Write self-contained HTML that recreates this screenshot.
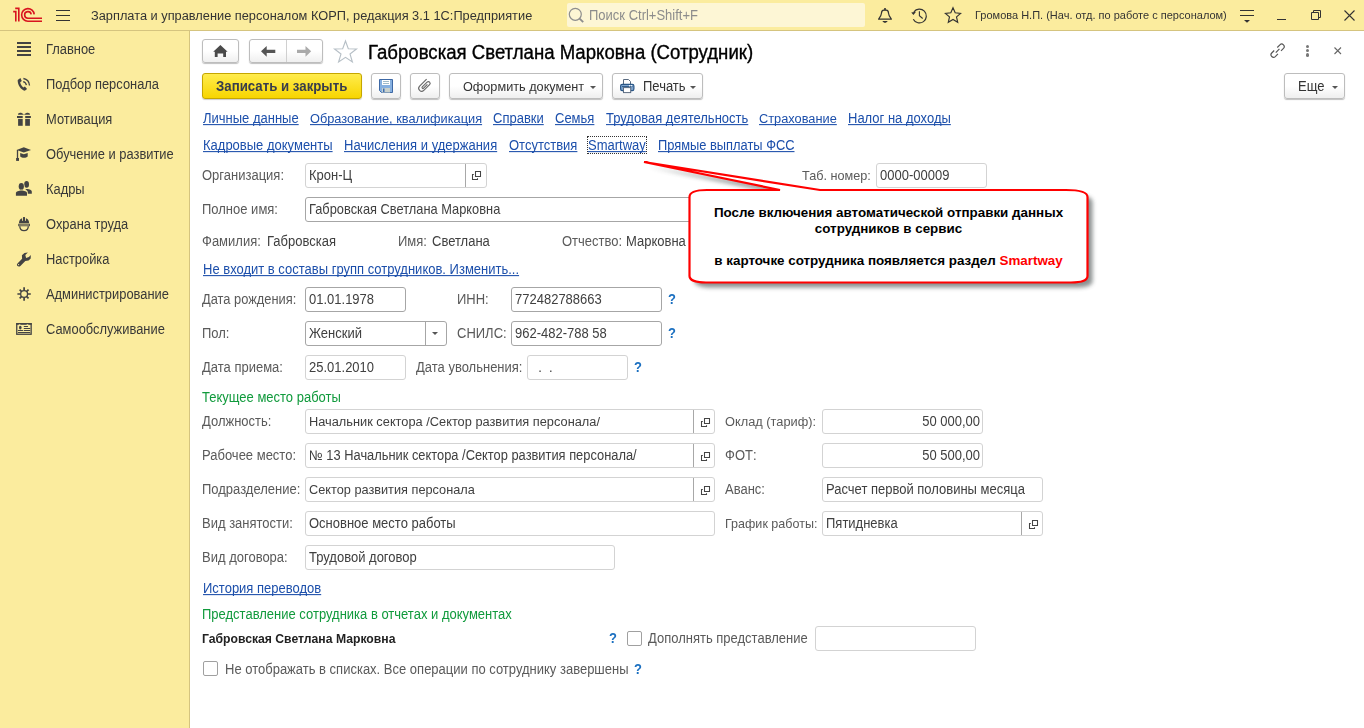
<!DOCTYPE html><html><head><meta charset="utf-8"><style>
*{margin:0;padding:0;box-sizing:border-box}
html,body{width:1364px;height:728px;overflow:hidden;background:#fff;font-family:"Liberation Sans",sans-serif}
.t{position:absolute;font-size:13px;line-height:16px;white-space:pre;color:#5a5a5a;transform:scaleY(1.07);transform-origin:0 12px}
.val{color:#404040}
.lnk{color:#1c4fab;text-decoration:underline;text-decoration-skip-ink:none}
.grn{color:#109a3c}
.inp{position:absolute;border:1px solid #d3d3d3;border-radius:3px;background:#fff}
.inp.dk{border-color:#a6a6a6}
.div{position:absolute;width:1px;background:#a8a8a8}
.div.dk{background:#a6a6a6}
.ic{position:absolute;overflow:visible}
.btn{position:absolute;border:1px solid #bdbdbd;border-radius:3px;background:linear-gradient(#fff 0%,#fff 50%,#efefef 100%);box-shadow:0 1px 1px rgba(0,0,0,0.25)}
#hdr{position:absolute;left:0;top:0;width:1364px;height:31px;background:#fbec9e;border-bottom:1px solid #d5c47f}
#side{position:absolute;left:0;top:31px;width:190px;height:697px;background:#fbec9e;border-right:1px solid #d5c47f}
.side{color:#383838}
</style></head><body>
<div id="hdr"></div>
<div id="side"></div>
<svg class="ic" style="left:10px;top:5px" width="36" height="20"><g fill="none" stroke="#d8141f" stroke-width="1.6"><path d="M3.2 6.6 H5.8 V16.6"/><path d="M5.2 3.4 H8.8 V16.6"/><path d="M24.2 9.4 A6.3 6.3 0 1 0 17.9 16.2 H32"/><path d="M21.2 9.4 A3.3 3.3 0 1 0 17.9 13.2 H32"/></g></svg>
<svg class="ic" style="left:56px;top:9px" width="14" height="12"><path d="M0 1.5h14M0 6.5h14M0 11.5h14" stroke="#333" stroke-width="1.2"/></svg>
<div class="t" style="left:91px;top:8px;font-size:12.8px;color:#333">Зарплата и управление персоналом КОРП, редакция 3.1 1С:Предприятие</div>
<div style="position:absolute;left:567px;top:3px;width:298px;height:24px;background:#fdf6d5;border-radius:2px"></div>
<svg class="ic" style="left:562px;top:2px" width="24" height="24"><circle cx="13.3" cy="12.3" r="6" fill="none" stroke="#8e8e8e" stroke-width="1.2"/><path d="M17.6 16.6 L21.2 20.2" stroke="#8e8e8e" stroke-width="1.9"/></svg>
<div class="t" style="left:589px;top:8px;color:#8c8c8c">Поиск Ctrl+Shift+F</div>
<svg class="ic" style="left:877px;top:7px" width="16" height="17"><path d="M1.6 12.2 C1.8 11.3 4.3 9 4.4 6.5 C4.5 4 5.2 3.3 6.8 3.2 H9.2 C10.8 3.3 11.5 4 11.6 6.5 C11.7 9 14.2 11.3 14.4 12.2 Z" fill="none" stroke="#333" stroke-width="1.2" stroke-linejoin="round"/><rect x="7.2" y="1" width="1.6" height="2.3" fill="#333"/><path d="M5.4 14 H10.7 C10 15.2 9 15.8 8 15.8 C7 15.8 6 15.2 5.4 14 Z" fill="#333"/></svg>
<svg class="ic" style="left:906px;top:3px" width="24" height="24"><path d="M7.3 16.2 A6.9 6.9 0 1 0 7.9 8.9" fill="none" stroke="#333" stroke-width="1.2"/><path d="M5.2 9.5 L10 8.7 L7.5 12.1 Z" fill="#333"/><path d="M13.4 8.2 V12.8 L16.7 15.5" fill="none" stroke="#333" stroke-width="1.1"/></svg>
<svg class="ic" style="left:944px;top:3px" width="20" height="24"><path d="M9.00 4.80 L11.17 9.81 L16.61 10.33 L12.52 13.94 L13.70 19.27 L9.00 16.50 L4.30 19.27 L5.48 13.94 L1.39 10.33 L6.83 9.81 Z" fill="none" stroke="#333" stroke-width="1.15" stroke-linejoin="miter"/></svg>
<div class="t" style="left:975px;top:7px;font-size:11px;color:#333">Громова Н.П. (Нач. отд. по работе с персоналом)</div>
<svg class="ic" style="left:1240px;top:9px" width="15" height="15"><path d="M0 1.5h14M0 6.5h14" stroke="#333" stroke-width="1.1"/><path d="M4 11h6l-3 2.7z" fill="#333"/></svg>
<div style="position:absolute;left:1277px;top:19px;width:9px;height:1px;background:#333"></div>
<svg class="ic" style="left:1311px;top:10px" width="10" height="10"><path d="M0.5 2.5h7v7h-7z M2.5 2.5v-2h7v7h-2" fill="none" stroke="#333" stroke-width="1"/></svg>
<svg class="ic" style="left:1344px;top:10px" width="11" height="11"><path d="M0.5 0.5L10.5 10.5M10.5 0.5L0.5 10.5" stroke="#333" stroke-width="1.1"/></svg>
<div class="t side" style="left:46px;top:42px;font-size:12.9px">Главное</div>
<div class="t side" style="left:46px;top:77px;font-size:12.9px">Подбор персонала</div>
<div class="t side" style="left:46px;top:112px;font-size:12.9px">Мотивация</div>
<div class="t side" style="left:46px;top:147px;font-size:12.9px">Обучение и развитие</div>
<div class="t side" style="left:46px;top:182px;font-size:12.9px">Кадры</div>
<div class="t side" style="left:46px;top:217px;font-size:12.9px">Охрана труда</div>
<div class="t side" style="left:46px;top:252px;font-size:12.9px">Настройка</div>
<div class="t side" style="left:46px;top:287px;font-size:12.9px">Администрирование</div>
<div class="t side" style="left:46px;top:322px;font-size:12.9px">Самообслуживание</div>
<svg class="ic" style="left:17px;top:42px" width="16" height="15"><path d="M0 1h14M0 5h14M0 9h14M0 13h14" stroke="#434343" stroke-width="2"/></svg>
<svg class="ic" style="left:17px;top:77px" width="16" height="15"><path d="M0.7 3 L3.4 0.9 L4.8 4 L3.2 5.2 C3.5 7.2 4.6 8.9 6.3 10.4 L7.9 9.6 L10.1 12.1 L7.8 13.7 C3.8 12.8 0.4 7.6 0.7 3 Z" fill="#434343"/><path d="M6.4 1.5 A7.6 7.6 0 0 1 12.5 8.5 M6.2 4.6 A4.5 4.5 0 0 1 9.4 8.2" fill="none" stroke="#434343" stroke-width="1.3"/></svg>
<svg class="ic" style="left:17px;top:112px" width="16" height="15"><path d="M1 2.7 C1 0.4 4.6 0 6.9 2.8 Z M13 2.7 C13 0.4 9.4 0 7.1 2.8 Z" fill="#434343"/><rect x="0" y="4" width="5.7" height="2" fill="#434343"/><rect x="8.2" y="4" width="5.7" height="2" fill="#434343"/><rect x="1.1" y="6.9" width="4.6" height="6.9" fill="#434343"/><rect x="8.2" y="6.9" width="4.7" height="6.9" fill="#434343"/></svg>
<svg class="ic" style="left:17px;top:147px" width="16" height="15"><path d="M-0.4 3 L6.8 0.3 L14 3 L6.8 5.5 Z" fill="#434343"/><path d="M3.2 5.9 L6.8 7.2 L10.7 5.9 V9.4 C9 11.2 5 11.2 3.2 9.4 Z" fill="#434343"/><path d="M0.5 3 V11.5" stroke="#434343" stroke-width="1.3"/><rect x="-0.9" y="11" width="2.9" height="2.9" fill="#434343"/></svg>
<svg class="ic" style="left:17px;top:182px" width="16" height="15"><ellipse cx="9.6" cy="2.4" rx="2.4" ry="3.3" fill="#434343"/><path d="M8.3 7.1 C11 6.5 14.8 7.2 14.8 9.6 V11.8 H10.6 V9.2 Z" fill="#434343"/><ellipse cx="4.3" cy="4.4" rx="2.6" ry="3.4" fill="#434343" stroke="#fbec9e" stroke-width="1.2" paint-order="stroke"/><path d="M-1.1 13.8 V11 C-1.1 9.4 2 8.4 4.4 8.4 C7 8.4 10 9.4 10 11 V13.8 Z" fill="#434343" stroke="#fbec9e" stroke-width="1.2" paint-order="stroke"/></svg>
<svg class="ic" style="left:17px;top:217px" width="16" height="15"><path d="M2 6.2 C2 3 4 0.7 7 0.7 C10 0.7 12.1 3 12.1 6.2 Z" fill="#434343"/><rect x="5.1" y="0" width="0.9" height="3.8" fill="#fbec9e"/><rect x="8" y="0" width="0.9" height="3.8" fill="#fbec9e"/><rect x="6.1" y="0" width="1.8" height="4" fill="#434343"/><rect x="1.7" y="7.2" width="10.8" height="1.6" fill="none" stroke="#434343" stroke-width="0.9"/><path d="M2.8 9.3 C2.8 12 4.6 13.6 7 13.6 C9.4 13.6 11.3 12 11.3 9.3" fill="none" stroke="#434343" stroke-width="1.3"/></svg>
<svg class="ic" style="left:17px;top:252px" width="16" height="15"><path d="M0.5 11.4 L5.1 6.8 L4.9 3.3 L7.5 1.1 L10.9 0.5 L8.3 3.1 L9.1 5.9 L11.9 5 L13.8 3.1 L13.7 6.6 L11.6 8.6 L8.3 9 L3.4 13.9 C2.5 14.8 1 14.7 0.3 13.8 C-0.3 13 -0.2 12.1 0.5 11.4 Z" fill="#434343"/><circle cx="1.6" cy="12.6" r="0.65" fill="#fbec9e"/></svg>
<svg class="ic" style="left:17px;top:287px" width="16" height="15"><circle cx="7.1" cy="7" r="3.45" fill="none" stroke="#434343" stroke-width="1.3"/><path d="M10.90 7.00L13.80 7.00M9.79 9.69L11.55 11.45M7.10 10.80L7.10 13.70M4.41 9.69L2.65 11.45M3.30 7.00L0.40 7.00M4.41 4.31L2.65 2.55M7.10 3.20L7.10 0.30M9.79 4.31L11.55 2.55" stroke="#434343" stroke-width="1.7"/></svg>
<svg class="ic" style="left:17px;top:322px" width="16" height="15"><rect x="-0.25" y="1.75" width="14.4" height="10.5" fill="none" stroke="#434343" stroke-width="1.3"/><rect x="-0.9" y="1.1" width="15.7" height="1.6" fill="#434343"/><ellipse cx="2.6" cy="2.9" rx="1" ry="0.6" fill="#fbec9e"/><ellipse cx="10.5" cy="2.9" rx="1" ry="0.6" fill="#fbec9e"/><ellipse cx="3.3" cy="5.6" rx="1.3" ry="1.9" fill="#434343"/><path d="M1.3 8.5H5.6M7.2 4.5H10.6M7.2 6.4H12.8M7.2 8.5H12.8M1.3 10.4H12.8" stroke="#434343" stroke-width="1.05" stroke-linecap="round"/></svg>
<div class="btn" style="left:202px;top:39px;width:37px;height:24px"></div>
<svg class="ic" style="left:212px;top:44px" width="17" height="15"><path d="M8.4 1 L15.6 7.8 H14 V13.1 H11.2 V9.5 H5.6 V13.1 H2.8 V7.8 H1.2 Z" fill="#4a4a4a"/></svg>
<div class="btn" style="left:249px;top:39px;width:74px;height:24px"></div>
<div style="position:absolute;left:286px;top:40px;width:1px;height:22px;background:#d0d0d0"></div>
<svg class="ic" style="left:260px;top:45px" width="17" height="13"><path d="M1 6.3 L6.7 0.9 V4.7 H15.3 V8 H6.7 V11.8 Z" fill="#555"/></svg>
<svg class="ic" style="left:296px;top:45px" width="17" height="13"><path d="M15.2 6.3 L9.5 0.9 V4.7 H1 V8 H9.5 V11.8 Z" fill="#aaa"/></svg>
<svg class="ic" style="left:333px;top:40px" width="25" height="23"><path d="M12.5 1 L15.3 8.8 L23.5 9 L17 14 L19.4 22 L12.5 17.3 L5.6 22 L8 14 L1.5 9 L9.7 8.8 Z" fill="none" stroke="#b6bfc6" stroke-width="1.1"/></svg>
<div class="t" style="left:368px;top:42.5px;font-size:18.6px;line-height:20px;color:#000;-webkit-text-stroke:0.35px #000;transform:scaleY(1.06);transform-origin:0 16px">Габровская Светлана Марковна (Сотрудник)</div>
<svg class="ic" style="left:1270px;top:43px" width="16" height="16"><g transform="translate(7.6 7.7) scale(0.87) translate(-7.4 -7.5)"><path d="M5.3 9.7 L9.5 5.3" stroke="#555" stroke-width="1.35"/><path d="M7.0 3.8 L10.05 0.75 A2.9 2.9 0 0 1 14.15 4.85 L11.3 7.7 M7.8 11.2 L4.75 14.25 A2.9 2.9 0 0 1 0.65 10.15 L3.5 7.3" fill="none" stroke="#555" stroke-width="1.35"/></g></svg>
<div style="position:absolute;left:1305.5px;top:44.8px;width:3.4px;height:3.4px;border-radius:50%;background:#777"></div>
<div style="position:absolute;left:1305.5px;top:49.0px;width:3.4px;height:3.4px;border-radius:50%;background:#777"></div>
<div style="position:absolute;left:1305.5px;top:53.2px;width:3.4px;height:3.4px;border-radius:50%;background:#777"></div>
<svg class="ic" style="left:1334px;top:47px" width="8" height="8"><path d="M0.5 0.5L7 7M7 0.5L0.5 7" stroke="#666" stroke-width="1.1"/></svg>
<div style="position:absolute;left:202px;top:73px;width:160px;height:26px;border:1px solid #c5a600;border-radius:3px;background:linear-gradient(#ffec4d,#f7d500);box-shadow:0 1px 1px rgba(0,0,0,0.2)"></div>
<div class="t" style="left:216px;top:79px;font-weight:bold;font-size:13.25px;color:#373c4c">Записать и закрыть</div>
<div class="btn" style="left:371px;top:73px;width:30px;height:26px"></div>
<svg class="ic" style="left:379px;top:79px" width="14" height="14"><path d="M0.5 0.5 H13.5 V13.5 H2.5 L0.5 11.5z" fill="#86b0e0" stroke="#3d68a5" stroke-width="1"/><rect x="3" y="1" width="8" height="5" fill="#fff"/><path d="M4 2.5h6M4 4.5h6" stroke="#8ab" stroke-width="0.8"/><rect x="3" y="9" width="8" height="4.5" fill="#c8d0cc"/><rect x="4" y="9.5" width="1.5" height="3.5" fill="#3e6db0"/></svg>
<div class="btn" style="left:410px;top:73px;width:30px;height:26px"></div>
<svg class="ic" style="left:414px;top:76px" width="22" height="20"><path d="M12.6 3.2 L5.6 10.2 A2.97 2.97 0 0 0 9.8 14.4 L15.6 8.6 A1.75 1.75 0 0 0 13.1 6.1 L8.3 10.9 A0.9 0.9 0 0 0 9.6 12.2 L13.4 8.4" fill="none" stroke="#6a6a6a" stroke-width="1.15"/></svg>
<div class="btn" style="left:449px;top:73px;width:154px;height:26px"></div>
<div class="t" style="left:463px;top:79px;color:#333;font-size:12.7px">Оформить документ</div>
<svg class="ic" style="left:590px;top:86px" width="7" height="4"><path d="M0 0h6l-3 3z" fill="#555"/></svg>
<div class="btn" style="left:612px;top:73px;width:91px;height:26px"></div>
<svg class="ic" style="left:615px;top:74px" width="25" height="24"><path d="M8.5 5.5 H13.5 L15.5 7.5 V10.5 H8.5 Z" fill="#fff" stroke="#5a6b80" stroke-width="1"/><rect x="5.6" y="10.3" width="13.3" height="6.3" rx="1.6" fill="#7fa5cf" stroke="#2a5787" stroke-width="1.2"/><path d="M7 12.6 H17.5" stroke="#2a5787" stroke-width="1"/><circle cx="14.6" cy="11.7" r="0.7" fill="#fff"/><circle cx="16.5" cy="11.7" r="0.7" fill="#fff"/><rect x="8.5" y="13.6" width="7.2" height="5" fill="#fff" stroke="#5a6b80" stroke-width="1"/></svg>
<div class="t" style="left:643px;top:79px;color:#333">Печать</div>
<svg class="ic" style="left:690px;top:86px" width="7" height="4"><path d="M0 0h6l-3 3z" fill="#555"/></svg>
<div class="btn" style="left:1284px;top:73px;width:61px;height:26px"></div>
<div class="t" style="left:1298px;top:79px;color:#333">Еще</div>
<svg class="ic" style="left:1332px;top:86px" width="7" height="4"><path d="M0 0h6l-3 3z" fill="#555"/></svg>
<div class="t lnk" style="left:203px;top:111px;">Личные данные</div>
<div class="t lnk" style="left:310px;top:111px;font-size:12.77px">Образование, квалификация</div>
<div class="t lnk" style="left:493px;top:111px;">Справки</div>
<div class="t lnk" style="left:555px;top:111px;">Семья</div>
<div class="t lnk" style="left:606px;top:111px;">Трудовая деятельность</div>
<div class="t lnk" style="left:759px;top:111px;font-size:12.8px">Страхование</div>
<div class="t lnk" style="left:848px;top:111px;">Налог на доходы</div>
<div class="t lnk" style="left:203px;top:138px;">Кадровые документы</div>
<div class="t lnk" style="left:344px;top:138px;">Начисления и удержания</div>
<div class="t lnk" style="left:509px;top:138px;">Отсутствия</div>
<div class="t lnk" style="left:588px;top:138px;">Smartway</div>
<div class="t lnk" style="left:658px;top:138px;font-size:12.87px">Прямые выплаты ФСС</div>
<div style="position:absolute;left:587px;top:136px;width:60px;height:18px;border:1px dotted #333"></div>
<div class="t lbl" style="left:202px;top:168px;">Организация:</div>
<div class="inp " style="left:305px;top:163px;width:182px;height:25px;"></div>
<div class="div " style="left:465px;top:164px;height:23px"></div>
<div class="t val" style="left:309px;top:168px;">Крон-Ц</div>
<svg class="ic" style="left:472px;top:171px" width="10" height="10" viewBox="0 0 10 10"><path d="M3.5 0.5h5v5h-5z M1.8 3.5H0.5V8.5H5.5V7.2" fill="none" stroke="#444" stroke-width="1.05"/></svg>
<div class="t lbl" style="left:802px;top:168px;font-size:12.68px">Таб. номер:</div>
<div class="inp " style="left:876px;top:163px;width:111px;height:25px;"></div>
<div class="t val" style="left:880px;top:168px;">0000-00009</div>
<div class="t lbl" style="left:202px;top:202px;">Полное имя:</div>
<div class="inp dk" style="left:305px;top:197px;width:696px;height:25px;"></div>
<div class="t val" style="left:309px;top:202px;font-size:12.83px">Габровская Светлана Марковна</div>
<div class="t lbl" style="left:202px;top:234px;">Фамилия:</div>
<div class="t val" style="left:267px;top:234px;">Габровская</div>
<div class="t lbl" style="left:398px;top:234px;">Имя:</div>
<div class="t val" style="left:432px;top:234px;">Светлана</div>
<div class="t lbl" style="left:562px;top:234px;">Отчество:</div>
<div class="t val" style="left:626px;top:234px;">Марковна</div>
<div class="t lnk" style="left:203px;top:262px;">Не входит в составы групп сотрудников. Изменить...</div>
<div class="t lbl" style="left:202px;top:292px;font-size:12.87px">Дата рождения:</div>
<div class="inp dk" style="left:305px;top:287px;width:101px;height:25px;"></div>
<div class="t val" style="left:309px;top:292px;">01.01.1978</div>
<div class="t lbl" style="left:457px;top:292px;">ИНН:</div>
<div class="inp dk" style="left:511px;top:287px;width:151px;height:25px;"></div>
<div class="t val" style="left:515px;top:292px;">772482788663</div>
<div class="t " style="left:668px;top:292px;color:#1a6fc0;font-weight:bold;font-size:13px">?</div>
<div class="t lbl" style="left:202px;top:326px;">Пол:</div>
<div class="inp dk" style="left:305px;top:321px;width:142px;height:25px;"></div>
<div class="div dk" style="left:425px;top:322px;height:23px"></div>
<div class="t val" style="left:309px;top:326px;">Женский</div>
<svg class="ic" style="left:432px;top:332px" width="7" height="4"><path d="M0 0h6l-3 3z" fill="#555"/></svg>
<div class="t lbl" style="left:457px;top:326px;">СНИЛС:</div>
<div class="inp dk" style="left:511px;top:321px;width:151px;height:25px;"></div>
<div class="t val" style="left:515px;top:326px;">962-482-788 58</div>
<div class="t " style="left:668px;top:326px;color:#1a6fc0;font-weight:bold;font-size:13px">?</div>
<div class="t lbl" style="left:202px;top:360px;">Дата приема:</div>
<div class="inp " style="left:305px;top:355px;width:101px;height:25px;"></div>
<div class="t val" style="left:309px;top:360px;">25.01.2010</div>
<div class="t lbl" style="left:416px;top:360px;">Дата увольнения:</div>
<div class="inp " style="left:527px;top:355px;width:101px;height:25px;"></div>
<div class="t val" style="left:531px;top:360px;">  .  .</div>
<div class="t " style="left:634px;top:360px;color:#1a6fc0;font-weight:bold;font-size:13px">?</div>
<div class="t grn" style="left:202px;top:390px;">Текущее место работы</div>
<div class="t lbl" style="left:202px;top:414px;">Должность:</div>
<div class="inp " style="left:305px;top:409px;width:410px;height:25px;"></div>
<div class="div " style="left:693px;top:410px;height:23px"></div>
<div class="t val" style="left:309px;top:414px;font-size:12.8px">Начальник сектора /Сектор развития персонала/</div>
<svg class="ic" style="left:701px;top:418px" width="10" height="10" viewBox="0 0 10 10"><path d="M3.5 0.5h5v5h-5z M1.8 3.5H0.5V8.5H5.5V7.2" fill="none" stroke="#444" stroke-width="1.05"/></svg>
<div class="t lbl" style="left:202px;top:448px;">Рабочее место:</div>
<div class="inp " style="left:305px;top:443px;width:410px;height:25px;"></div>
<div class="div " style="left:693px;top:444px;height:23px"></div>
<div class="t val" style="left:309px;top:448px;font-size:12.87px">№ 13 Начальник сектора /Сектор развития персонала/</div>
<svg class="ic" style="left:701px;top:452px" width="10" height="10" viewBox="0 0 10 10"><path d="M3.5 0.5h5v5h-5z M1.8 3.5H0.5V8.5H5.5V7.2" fill="none" stroke="#444" stroke-width="1.05"/></svg>
<div class="t lbl" style="left:202px;top:482px;">Подразделение:</div>
<div class="inp " style="left:305px;top:477px;width:410px;height:25px;"></div>
<div class="div " style="left:693px;top:478px;height:23px"></div>
<div class="t val" style="left:309px;top:482px;font-size:12.74px">Сектор развития персонала</div>
<svg class="ic" style="left:701px;top:486px" width="10" height="10" viewBox="0 0 10 10"><path d="M3.5 0.5h5v5h-5z M1.8 3.5H0.5V8.5H5.5V7.2" fill="none" stroke="#444" stroke-width="1.05"/></svg>
<div class="t lbl" style="left:202px;top:516px;">Вид занятости:</div>
<div class="inp " style="left:305px;top:511px;width:410px;height:25px;"></div>
<div class="t val" style="left:309px;top:516px;">Основное место работы</div>
<div class="t lbl" style="left:202px;top:550px;">Вид договора:</div>
<div class="inp " style="left:305px;top:545px;width:310px;height:25px;"></div>
<div class="t val" style="left:309px;top:550px;">Трудовой договор</div>
<div class="t lbl" style="left:725px;top:414px;font-size:12.8px">Оклад (тариф):</div>
<div class="inp " style="left:822px;top:409px;width:161px;height:25px;"></div>
<div class="t val" style="left:822px;width:158px;text-align:right;top:414px">50 000,00</div>
<div class="t lbl" style="left:725px;top:448px;">ФОТ:</div>
<div class="inp " style="left:822px;top:443px;width:161px;height:25px;"></div>
<div class="t val" style="left:822px;width:158px;text-align:right;top:448px">50 500,00</div>
<div class="t lbl" style="left:725px;top:482px;">Аванс:</div>
<div class="inp " style="left:822px;top:477px;width:221px;height:25px;"></div>
<div class="t val" style="left:826px;top:482px;">Расчет первой половины месяца</div>
<div class="t lbl" style="left:725px;top:516px;font-size:12.55px">График работы:</div>
<div class="inp " style="left:822px;top:511px;width:221px;height:25px;"></div>
<div class="div " style="left:1021px;top:512px;height:23px"></div>
<div class="t val" style="left:826px;top:516px;">Пятидневка</div>
<svg class="ic" style="left:1029px;top:520px" width="10" height="10" viewBox="0 0 10 10"><path d="M3.5 0.5h5v5h-5z M1.8 3.5H0.5V8.5H5.5V7.2" fill="none" stroke="#444" stroke-width="1.05"/></svg>
<div class="t lnk" style="left:203px;top:581px;">История переводов</div>
<div class="t grn" style="left:202px;top:607px;">Представление сотрудника в отчетах и документах</div>
<div class="t " style="left:202px;top:631px;font-weight:bold;font-size:12.2px;color:#222">Габровская Светлана Марковна</div>
<div class="t " style="left:609px;top:631px;color:#1a6fc0;font-weight:bold;font-size:13px">?</div>
<div style="position:absolute;left:627px;top:631px;width:15px;height:15px;border:1px solid #a0a0a0;border-radius:2px"></div>
<div class="t lbl" style="left:648px;top:631px;">Дополнять представление</div>
<div class="inp " style="left:815px;top:626px;width:161px;height:25px;"></div>
<div style="position:absolute;left:203px;top:661px;width:15px;height:15px;border:1px solid #a0a0a0;border-radius:2px"></div>
<div class="t lbl" style="left:225px;top:662px;">Не отображать в списках. Все операции по сотруднику завершены</div>
<div class="t " style="left:634px;top:662px;color:#1a6fc0;font-weight:bold;font-size:13px">?</div>
<svg class="ic" style="left:0;top:0" width="1364" height="728" viewBox="0 0 1364 728"><defs><filter id="sh" x="-10%" y="-30%" width="130%" height="160%"><feGaussianBlur stdDeviation="2.2"/></filter></defs><path d="M707 190 H780 L644 162 L820 190 H1066 C1080 190 1087.5 192 1087.5 197 V276 C1087.5 281 1080 282.5 1071 282.5 H706 C696 282.5 689.5 280 689.5 276 V197 C689.5 192 696 190 707 190 Z" fill="#808585" opacity="0.9" transform="translate(5,5)" filter="url(#sh)"/><path d="M707 190 H780 L644 162 L820 190 H1066 C1080 190 1087.5 192 1087.5 197 V276 C1087.5 281 1080 282.5 1071 282.5 H706 C696 282.5 689.5 280 689.5 276 V197 C689.5 192 696 190 707 190 Z" fill="#fff" stroke="#ff0000" stroke-width="2.2"/></svg>
<div style="position:absolute;left:690px;top:205px;width:397px;text-align:center;font:bold 13.4px/16px 'Liberation Sans';color:#000">После включения автоматической отправки данных<br>сотрудников в сервис<br><br>в карточке сотрудника появляется раздел <span style="color:#ff0000">Smartway</span></div>
</body></html>
